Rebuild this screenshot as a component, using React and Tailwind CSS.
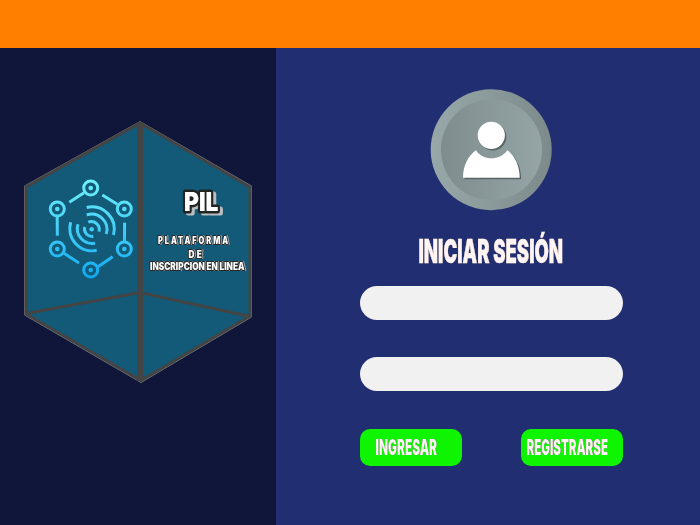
const nodes = [[90.7, 188], [57.3, 209], [124.3, 209], [57.3, 249], [124.3, 249], [90.7, 270]];

function Logo() {
  return (
    <svg viewBox="20 118 236 268" className="h-[268px] w-[236px] overflow-visible" role="img" aria-label="PIL">
      <defs>
        <linearGradient id="net" gradientUnits="userSpaceOnUse" x1="0" y1="180" x2="0" y2="278">
          <stop offset="0" stopColor="#70f0fa" />
          <stop offset="0.5" stopColor="#42cef6" />
          <stop offset="1" stopColor="#10a8f2" />
        </linearGradient>
      </defs>
      <path d="M140 121.5 251.5 186V317L141 382.5 24.5 315V186Z" fill="#125a78" stroke="#77797a" strokeWidth="1" />
      <path d="M140 123 250 187V316L141 380.5 26 314V187Z" fill="none" stroke="#444444" strokeWidth="3" />
      <path d="M26 313.5 140 292.5 250 316.5" fill="none" stroke="#444444" strokeWidth="3" />
      <path d="M140 122V381" stroke="#444444" strokeWidth="6" />
      <g fill="none" stroke="url(#net)" strokeWidth="3">
        {nodes.map(([x, y]) => <circle key={x + "-" + y} cx={x} cy={y} r="7" />)}
        <path d="M69.3 202.3 84 192.7M102.3 195 117.3 204.3M57.2 216 57.3 235.7M124.6 222.7 124.5 241.7M64 253.3 79 263M98 266.7 112.7 256.7" />
        <path d="M86.7 207.5A22.4 22.4 0 0 1 113.5 235M86.7 214.9A15.3 15.3 0 0 1 106.2 234M88.3 222.2A8 8 0 0 1 99 231.7" />
        <path d="M70.7 222.3A22.2 22.2 0 0 0 96.7 250.3M78 224.3A14.8 14.8 0 0 0 95 243.2M84.7 227A7.5 7.5 0 0 0 93.3 236.3" />
      </g>
      <g fill="url(#net)">
        {nodes.map(([x, y]) => <circle key={x + "-" + y} cx={x} cy={y} r="2.3" />)}
        <circle cx="91.7" cy="229.3" r="2.3" />
      </g>
      <g className="font-[Inter,sans-serif] font-black" strokeLinejoin="round" fill="#ffffff">
        <g className="drop-shadow-[3px_2px_0px_#b9bdc0]">
          <text x="184" y="211" fontSize="26" textLength="34.5" lengthAdjust="spacingAndGlyphs" stroke="#202422" strokeWidth="5" paintOrder="stroke">
            PIL
          </text>
        </g>
        <g stroke="#26292a" strokeWidth="2.2" fontSize="9.8" paintOrder="stroke" className="drop-shadow-[1px_0px_0px_#9aa4a8]">
          <text x="158" y="244" textLength="72" letterSpacing="2.6" lengthAdjust="spacingAndGlyphs">PLATAFORMA</text>
          <text x="188.5" y="258" textLength="15.5" letterSpacing="2.6" lengthAdjust="spacingAndGlyphs">DE</text>
          <text x="150" y="270.3" textLength="94.5" lengthAdjust="spacingAndGlyphs">INSCRIPCION EN LINEA</text>
        </g>
      </g>
    </svg>
  );
}

function Avatar() {
  return (
    <svg viewBox="430 88 123 123" className="h-[123px] w-[123px]" aria-hidden="true">
      <defs>
        <linearGradient id="rim"><stop stopColor="#98a8a8" /><stop offset="1" stopColor="#7c8a8b" /></linearGradient>
        <linearGradient id="disc"><stop stopColor="#7e8c8d" /><stop offset="1" stopColor="#95a5a5" /></linearGradient>
      </defs>
      <circle cx="491.2" cy="149.7" r="60.5" fill="url(#rim)" />
      <circle cx="491.5" cy="149.7" r="50.5" fill="url(#disc)" />
      {[["#586566", "translate(1.5 1.5)"], ["#ffffff", "translate(0 0)"]].map(([color, shift]) => (
        <g key={color} fill={color} transform={shift}>
          <circle cx="491.3" cy="135.3" r="13.6" />
          <path d="M463 177.7C463 166 468 156 476 150.3C483 161 500 161 507.3 150.3C515 156 519.7 166 519.7 177.7Z" />
        </g>
      ))}
    </svg>
  );
}

function Lettering({ children, width, size, y, height, tone }) {
  return (
    <svg className="block overflow-visible" width={width} height={height}>
      <text
        x="-0.5" y={y} fontSize={size} textLength={width + 1} lengthAdjust="spacingAndGlyphs"
        className={"fill-[#fff4f4] font-[Inter,sans-serif] font-black " + tone}
      >{children}</text>
    </svg>
  );
}

const headingTone = "stroke-[#fff4f4] stroke-[0.4px] drop-shadow-[0.7px_0.9px_0.3px_#403a44]";
const buttonTone = "drop-shadow-[0.6px_0.9px_0.2px_#403a44]";

export default function App() {
  return (
    <div className="flex h-[525px] w-[700px] flex-col overflow-hidden bg-[#222e72]">
      <header className="h-12 shrink-0 bg-[#ff8000]" />
      <div className="flex flex-1">
        <aside className="w-[275.5px] shrink-0 bg-[#101639] pt-[70px] pl-5">
          <Logo />
        </aside>
        <main className="flex flex-1 flex-col pt-10 pl-[84.6px]">
          <div className="flex w-[263px] flex-col">
            <div className="ml-[70px]"><Avatar /></div>
            <h1 className="mt-[27px] ml-[59px] h-[30px]">
              <Lettering width={143.5} size={32.5} y={24.8} height={30} tone={headingTone}>INICIAR SESIÓN</Lettering>
            </h1>
            <input aria-label="Usuario" className="mt-[18.3px] h-[33.5px] rounded-full bg-[#f1f1f1] px-4 outline-none" />
            <input aria-label="Contraseña" type="password" className="mt-[37.7px] h-[33.5px] rounded-full bg-[#f1f1f1] px-4 outline-none" />
            <div className="mt-[38px] flex justify-between pr-[0.6px]">
              <button className="h-[37.3px] w-[101.5px] rounded-[10px] bg-[#0ff400] pl-[15.5px]">
                <Lettering width={60.5} size={21} y={16.5} height={20} tone={buttonTone}>INGRESAR</Lettering>
              </button>
              <button className="h-[37.3px] w-[101.5px] rounded-[10px] bg-[#0ff400] pl-[6px]">
                <Lettering width={80.5} size={21} y={16.5} height={20} tone={buttonTone}>REGISTRARSE</Lettering>
              </button>
            </div>
          </div>
        </main>
      </div>
    </div>
  );
}
